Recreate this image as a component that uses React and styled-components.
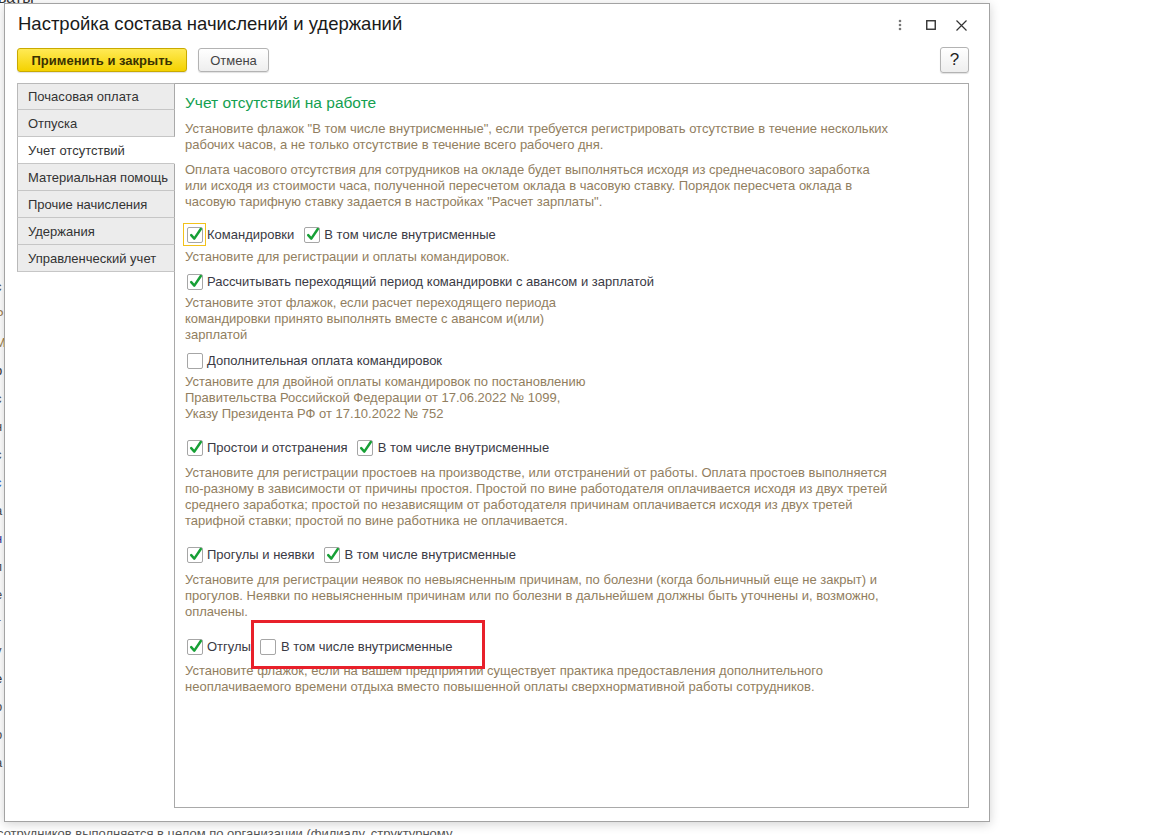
import React from 'react'
import styled, { createGlobalStyle } from 'styled-components'

const GlobalStyle = createGlobalStyle`
  html, body {
    margin: 0;
    padding: 0;
    background: #fff;
  }
  body {
    font-family: "Liberation Sans", Arial, sans-serif;
  }
`;

const Screen = styled.div`
  position: relative;
  width: 1152px;
  height: 835px;
  overflow: hidden;
  background: #fff;
`;

const Backdrop = styled.div`
  height: 100%;
  display: flex;
  flex-direction: column;
  font-size: 13px;
  color: #4d4d4d;
`;

const BackTop = styled.div`
  margin-top: -11px;
  margin-left: -2px;
  font-size: 16px;
  line-height: 18px;
  color: #333;
`;

const BackLines = styled.div`
  margin: 272px 0 0 -5px;
  display: flex;
  flex-direction: column;
  gap: 12px;
  line-height: 16px;
`;

const BackLine = styled.div`
  color: ${(p) => p.$color || '#4d4d4d'};
`;

const BackBottom = styled.div`
  margin-top: auto;
  margin-bottom: -6px;
  margin-left: -3px;
  color: #555;
`;

const Dialog = styled.div`
  position: absolute;
  left: 4px;
  top: 3px;
  width: 984px;
  height: 817px;
  background: #fff;
  border: 1px solid #a3a3a3;
  box-shadow: 0 2px 10px rgba(0, 0, 0, 0.18);
  display: flex;
  flex-direction: column;
`;

const TitleBar = styled.div`
  height: 43px;
  display: flex;
  align-items: flex-start;
  padding: 9px 0 0 13px;
  box-sizing: border-box;
`;

const Title = styled.div`
  flex: 1;
  font-size: 18.5px;
  line-height: 22px;
  color: #1a1a1a;
`;

const WinButtons = styled.div`
  display: flex;
  align-items: center;
  height: 24px;
  padding-right: 12px;
`;

const WinBtn = styled.div`
  width: 31px;
  height: 22px;
  display: flex;
  align-items: center;
  justify-content: center;
`;

const Toolbar = styled.div`
  display: flex;
  align-items: center;
  padding: 0 20px 0 12px;
  height: 26px;
`;

const Button = styled.div`
  height: 24px;
  box-sizing: border-box;
  padding: 0 12px;
  display: flex;
  align-items: center;
  justify-content: center;
  border-radius: 3px;
  font-size: 13px;
  border: 1px solid ${(p) => (p.$primary ? '#c9aa00' : '#b3b3b3')};
  background: ${(p) =>
    p.$primary
      ? 'linear-gradient(#ffea55, #f4d200)'
      : 'linear-gradient(#ffffff, #eeeeee)'};
  color: ${(p) => (p.$primary ? '#3a3200' : '#444')};
  font-weight: ${(p) => (p.$primary ? 'bold' : 'normal')};
  width: ${(p) => p.$width}px;
  margin-left: ${(p) => p.$ml || 0}px;
  box-shadow: 0 1px 1px rgba(0, 0, 0, 0.12);
`;

const HelpButton = styled(Button)`
  margin-left: auto;
  height: 26px;
  font-size: 17px;
  color: #222;
  padding: 0;
`;

const Body = styled.div`
  flex: 1;
  display: flex;
  padding: 10px 20px 13px 12px;
  min-height: 0;
`;

const TabList = styled.div`
  width: 158px;
  flex-shrink: 0;
  margin-right: -1px;
  z-index: 1;
  display: flex;
  flex-direction: column;
  align-self: flex-start;
`;

const Tab = styled.div`
  height: 26px;
  display: flex;
  align-items: center;
  padding-left: 10px;
  font-size: 13px;
  color: #333;
  background: ${(p) => (p.$active ? '#fff' : '#ececec')};
  border-left: 1px solid #b9b9b9;
  border-bottom: 1px solid #c6c6c6;
  border-right: 1px solid ${(p) => (p.$active ? '#fff' : '#a9a9a9')};
  &:first-child {
    border-top: 1px solid #b9b9b9;
    height: 25px;
  }
`;

const Panel = styled.div`
  position: relative;
  flex: 1;
  border: 1px solid #a9a9a9;
  padding: 9px 10px 0 10px;
  font-size: 13px;
`;

const Heading = styled.div`
  font-size: 15.5px;
  line-height: 20px;
  color: #13a050;
`;

const Hint = styled.div`
  color: #917e60;
  line-height: 16px;
  margin-top: ${(p) => p.$mt || 0}px;
`;

const Row = styled.div`
  display: flex;
  align-items: center;
  height: 23px;
  gap: 8px;
  margin-top: ${(p) => p.$mt || 0}px;
`;

const Item = styled.div`
  display: flex;
  align-items: center;
`;

const Frame = styled.div`
  width: 21px;
  height: 21px;
  margin-left: -2px;
  display: flex;
  align-items: center;
  justify-content: center;
  border: 1px solid ${(p) => (p.$focused ? '#f2c21b' : 'transparent')};
`;

const Box = styled.div`
  width: 14px;
  height: 14px;
  border: 1px solid #a6a6a6;
  border-radius: 2px;
  background: #fff;
  position: relative;
  svg {
    position: absolute;
    left: 0;
    top: -2px;
    overflow: visible;
  }
`;

const Label = styled.span`
  color: #3a3a44;
  line-height: 16px;
  margin-left: 1px;
`;

const Highlight = styled.div`
  position: absolute;
  left: 76px;
  top: 536px;
  width: 234px;
  height: 49px;
  box-sizing: border-box;
  border: 3px solid #e8202a;
`;

const CheckMark = () => (
  <svg width="16" height="17" viewBox="0 0 16 17">
    <path
      d="M3.2 9.2 L6.3 12.6 L12.8 3"
      fill="none"
      stroke="#17a036"
      strokeWidth="2.5"
      strokeLinecap="round"
      strokeLinejoin="round"
    />
  </svg>
);

const Check = ({ checked, focused, children }) => (
  <Item>
    <Frame $focused={focused}>
      <Box>{checked && <CheckMark />}</Box>
    </Frame>
    <Label>{children}</Label>
  </Item>
);

const tabs = [
  'Почасовая оплата',
  'Отпуска',
  'Учет отсутствий',
  'Материальная помощь',
  'Прочие начисления',
  'Удержания',
  'Управленческий учет',
];

const backLines = [
  ['с', '#4d4d4d'],
  ['Р', '#a08050'],
  ['М', '#a08050'],
  ['р', '#333'],
  ['с', '#4d4d4d'],
  ['н', '#4d4d4d'],
  ['с', '#4d4d4d'],
  ['с', '#3366cc'],
  ['а', '#4d4d4d'],
  ['н', '#333399'],
  ['п', '#4d4d4d'],
  ['е', '#4d4d4d'],
  ['т', '#4d4d4d'],
  ['у', '#4d4d4d'],
  ['е', '#333'],
  ['о', '#4d4d4d'],
  ['о', '#4d4d4d'],
  ['а', '#4d4d4d'],
];

const App = () => {
  return (
    <Screen>
      <GlobalStyle />
      <Backdrop>
        <BackTop>ваты</BackTop>
        <BackLines>
          {backLines.map(([t, c], i) => (
            <BackLine key={i} $color={c}>{t}</BackLine>
          ))}
        </BackLines>
        <BackBottom>сотрудников выполняется в целом по организации (филиалу, структурному</BackBottom>
      </Backdrop>

      <Dialog>
        <TitleBar>
          <Title>Настройка состава начислений и удержаний</Title>
          <WinButtons>
            <WinBtn>
              <svg width="4" height="12" viewBox="0 0 4 12">
                <circle cx="2" cy="2" r="1.3" fill="#777" />
                <circle cx="2" cy="6" r="1.3" fill="#777" />
                <circle cx="2" cy="10" r="1.3" fill="#777" />
              </svg>
            </WinBtn>
            <WinBtn>
              <svg width="10" height="10" viewBox="0 0 10 10">
                <rect x="0.75" y="0.75" width="8.5" height="8.5" fill="none" stroke="#333" strokeWidth="1.4" />
              </svg>
            </WinBtn>
            <WinBtn>
              <svg width="11" height="11" viewBox="0 0 11 11">
                <path d="M0.5 0.5 L10.5 10.5 M10.5 0.5 L0.5 10.5" stroke="#333" strokeWidth="1.2" />
              </svg>
            </WinBtn>
          </WinButtons>
        </TitleBar>

        <Toolbar>
          <Button $primary $width={170}>Применить и закрыть</Button>
          <Button $width={71} $ml={11}>Отмена</Button>
          <HelpButton $width={29}>?</HelpButton>
        </Toolbar>

        <Body>
          <TabList>
            {tabs.map((t) => (
              <Tab key={t} $active={t === 'Учет отсутствий'}>{t}</Tab>
            ))}
          </TabList>

          <Panel>
            <Heading>Учет отсутствий на работе</Heading>
            <Hint $mt={8}>
              Установите флажок "В том числе внутрисменные", если требуется регистрировать отсутствие в течение нескольких<br />
              рабочих часов, а не только отсутствие в течение всего рабочего дня.
            </Hint>
            <Hint $mt={9}>
              Оплата часового отсутствия для сотрудников на окладе будет выполняться исходя из среднечасового заработка<br />
              или исходя из стоимости часа, полученной пересчетом оклада в часовую ставку. Порядок пересчета оклада в<br />
              часовую тарифную ставку задается в настройках "Расчет зарплаты".
            </Hint>

            <Row $mt={13}>
              <Check checked focused>Командировки</Check>
              <Check checked>В том числе внутрисменные</Check>
            </Row>
            <Hint $mt={3}>Установите для регистрации и оплаты командировок.</Hint>

            <Row $mt={5}>
              <Check checked>Рассчитывать переходящий период командировки с авансом и зарплатой</Check>
            </Row>
            <Hint $mt={2}>
              Установите этот флажок, если расчет переходящего периода<br />
              командировки принято выполнять вместе с авансом и(или)<br />
              зарплатой
            </Hint>

            <Row $mt={6}>
              <Check>Дополнительная оплата командировок</Check>
            </Row>
            <Hint $mt={2}>
              Установите для двойной оплаты командировок по постановлению<br />
              Правительства Российской Федерации от 17.06.2022 № 1099,<br />
              Указу Президента РФ от 17.10.2022 № 752
            </Hint>

            <Row $mt={14}>
              <Check checked>Простои и отстранения</Check>
              <Check checked>В том числе внутрисменные</Check>
            </Row>
            <Hint $mt={6}>
              Установите для регистрации простоев на производстве, или отстранений от работы. Оплата простоев выполняется<br />
              по-разному в зависимости от причины простоя. Простой по вине работодателя оплачивается исходя из двух третей<br />
              среднего заработка; простой по независящим от работодателя причинам оплачивается исходя из двух третей<br />
              тарифной ставки; простой по вине работника не оплачивается.
            </Hint>

            <Row $mt={14}>
              <Check checked>Прогулы и неявки</Check>
              <Check checked>В том числе внутрисменные</Check>
            </Row>
            <Hint $mt={6}>
              Установите для регистрации неявок по невыясненным причинам, по болезни (когда больничный еще не закрыт) и<br />
              прогулов. Неявки по невыясненным причинам или по болезни в дальнейшем должны быть уточнены и, возможно,<br />
              оплачены.
            </Hint>

            <Row $mt={15}>
              <Check checked>Отгулы</Check>
              <Check>В том числе внутрисменные</Check>
            </Row>
            <Hint $mt={5}>
              Установите флажок, если на вашем предприятии существует практика предоставления дополнительного<br />
              неоплачиваемого времени отдыха вместо повышенной оплаты сверхнормативной работы сотрудников.
            </Hint>

            <Highlight />
          </Panel>
        </Body>
      </Dialog>
    </Screen>
  );
};

export default App;
